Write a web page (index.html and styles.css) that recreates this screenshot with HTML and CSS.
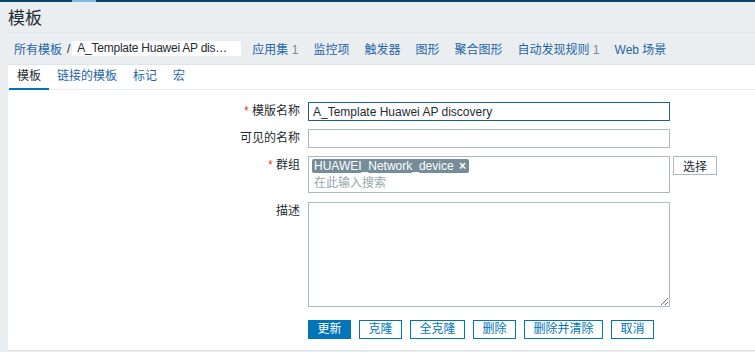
FILE: index.html
```html
<!DOCTYPE html>
<html lang="zh">
  <head>
    <meta charset="UTF-8" />
    <meta name="viewport" content="width=device-width, initial-scale=1.0" />
    <title>模板</title>
    <link rel="stylesheet" href="styles.css">
  </head>
  <body>
    <div class="topbar"><span class="topbar-active"></span></div>

    <header class="page-header">
      <h1>模板</h1>
    </header>

    <div class="host-nav">
      <a href="#" class="crumb">所有模板</a>
      <span class="crumb-sep">/</span>
      <span class="crumb-current" title="A_Template Huawei AP discovery">A_Template Huawei AP dis…</span>
      <ul class="nav-links">
        <li><a href="#">应用集</a> <span class="count">1</span></li>
        <li><a href="#">监控项</a></li>
        <li><a href="#">触发器</a></li>
        <li><a href="#">图形</a></li>
        <li><a href="#">聚合图形</a></li>
        <li><a href="#">自动发现规则</a> <span class="count">1</span></li>
        <li><a href="#">Web 场景</a></li>
      </ul>
    </div>

    <div class="panel">
      <ul class="tabs">
        <li class="active"><a href="#">模板</a></li>
        <li><a href="#">链接的模板</a></li>
        <li><a href="#">标记</a></li>
        <li><a href="#">宏</a></li>
      </ul>

      <form class="form-list">
        <div class="form-row row-name">
          <label class="required" for="template-name">模版名称</label>
          <div class="field">
            <input type="text" id="template-name" class="text-input focused" value="A_Template Huawei AP discovery" />
          </div>
        </div>

        <div class="form-row row-visible">
          <label for="visible-name">可见的名称</label>
          <div class="field">
            <input type="text" id="visible-name" class="text-input" />
          </div>
        </div>

        <div class="form-row row-groups">
          <label class="required">群组</label>
          <div class="field field-inline">
            <div class="multiselect">
              <ul class="tags">
                <li class="tag">HUAWEI_Network_device <span class="tag-remove">×</span></li>
              </ul>
              <input type="text" class="ms-search" placeholder="在此输入搜索" />
            </div>
            <button type="button" class="btn-grey">选择</button>
          </div>
        </div>

        <div class="form-row row-desc">
          <label for="description">描述</label>
          <div class="field">
            <textarea id="description" class="text-area"></textarea>
          </div>
        </div>

        <div class="form-row row-actions">
          <span></span>
          <div class="field actions">
            <button type="submit" class="btn btn-primary">更新</button>
            <button type="button" class="btn">克隆</button>
            <button type="button" class="btn">全克隆</button>
            <button type="button" class="btn">删除</button>
            <button type="button" class="btn">删除并清除</button>
            <button type="button" class="btn">取消</button>
          </div>
        </div>
      </form>
    </div>
  </body>
</html>
```

FILE: styles.css
```css
* {
  margin: 0;
  padding: 0;
  box-sizing: border-box;
}

body {
  background: #ebeef0;
  color: #1f2c33;
  font-family: "Liberation Sans", "Noto Sans CJK SC", sans-serif;
  font-size: 12px;
  overflow: hidden;
}

a {
  color: #1f65a6;
  text-decoration: none;
}

ul {
  list-style: none;
}

/* верхня смужка меню */
.topbar {
  height: 2px;
  background: #0a466a;
}

.topbar-active {
  display: block;
  width: 24px;
  height: 2px;
  margin-left: 72px;
  background: #7fbbe6;
}

.page-header {
  margin-left: 8px;
  padding-top: 3px;
  border-bottom: 1px solid #dfe4e7;
}

.page-header h1 {
  font-size: 17px;
  font-weight: normal;
  line-height: 27px;
}

.host-nav {
  display: flex;
  align-items: center;
  height: 32px;
  margin-left: 8px;
  padding-left: 6px;
  border-bottom: 1px solid #dfe4e7;
}

.crumb-sep {
  color: #1f2c33;
  margin: 0 2px 0 5px;
}

.crumb-current {
  flex: 0 0 169px;
  width: 169px;
  height: 15px;
  line-height: 15px;
  padding: 0 2px 0 5px;
  background: #fff;
  letter-spacing: -0.25px;
  white-space: nowrap;
  overflow: hidden;
}

.nav-links {
  display: flex;
  gap: 15px;
  margin-left: 11px;
  white-space: nowrap;
}

.nav-links .count {
  color: #768d99;
}

.panel {
  margin-left: 8px;
  background: #fff;
  border-bottom: 1px solid #dfe4e7;
}

.tabs {
  display: flex;
  height: 25px;
  padding-left: 1px;
  border-bottom: 1px solid #ebeef0;
}

.tabs li {
  padding: 0 8px;
  line-height: 23px;
}

.tabs li.active {
  border-bottom: 2px solid #0275b8;
  height: 25px;
}

.tabs li.active a {
  color: #1f2c33;
}

.form-list {
  padding: 12px 0 11px;
}

.form-row {
  display: grid;
  grid-template-columns: 292px auto;
  column-gap: 8px;
}

.form-row label {
  text-align: right;
  line-height: 19px;
}

.form-row label.required::before {
  content: "* ";
  color: #e33734;
}

.row-name,
.row-visible {
  margin-bottom: 8px;
}

.row-groups {
  margin-bottom: 9px;
}

.row-desc {
  margin-bottom: 13px;
}

.text-input {
  width: 362px;
  height: 19px;
  padding: 0 4px;
  border: 1px solid #acbbc2;
  font-family: inherit;
  font-size: 12px;
  color: #1f2c33;
  outline: none;
}

.text-input.focused {
  border-color: #1d5e8e;
}

.field-inline {
  display: flex;
  align-items: flex-start;
  gap: 3px;
}

.multiselect {
  width: 362px;
  height: 37px;
  border: 1px solid #acbbc2;
  padding: 2px 3px 0;
}

.tag {
  display: inline-block;
  background: #768d99;
  color: #fff;
  line-height: 14px;
  padding: 0 3px 0 2px;
  border-radius: 2px;
}

.tag-remove {
  font-weight: bold;
  margin-left: 2px;
}

.ms-search {
  display: block;
  width: 100%;
  height: 17px;
  margin-top: 1px;
  padding: 0 2px;
  border: none;
  outline: none;
  font-family: inherit;
  font-size: 12px;
}

.ms-search::placeholder {
  color: #9aa6ad;
}

.btn-grey {
  height: 19px;
  padding: 0 9px;
  background: #fff;
  border: 1px solid #acbbc2;
  color: #1f2c33;
  font-family: inherit;
  font-size: 12px;
}

.text-area {
  display: block;
  width: 362px;
  height: 105px;
  border: 1px solid #acbbc2;
  font-family: inherit;
  font-size: 12px;
  outline: none;
}

.actions {
  display: flex;
  gap: 8px;
}

.btn {
  height: 19px;
  padding: 0 8.5px;
  background: #fff;
  border: 1px solid #0275b8;
  color: #0275b8;
  font-family: inherit;
  font-size: 12px;
  line-height: 17px;
}

.btn-primary {
  background: #0275b8;
  color: #fff;
}
```
